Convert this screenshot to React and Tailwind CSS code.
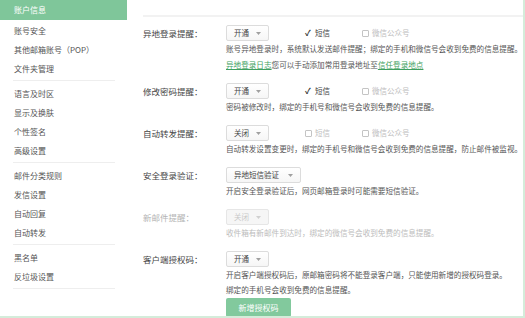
import React from 'react';

const font = { fontFamily: '"Noto Sans CJK SC", "Liberation Sans", sans-serif' };

const navGroups = [
  ['账户信息', '账号安全', '其他邮箱账号（POP）', '文件夹管理'],
  ['语言及时区', '显示及换肤', '个性签名', '高级设置'],
  ['邮件分类规则', '发信设置', '自动回复', '自动转发'],
  ['黑名单', '反垃圾设置'],
];

const Arrow = ({ light }) => (
  <svg width="5" height="3" viewBox="0 0 5 3" className="ml-auto">
    <path d="M0 0 L5 0 L2.5 3 Z" fill={light ? '#d0d0d0' : '#a0a0a0'} />
  </svg>
);

const Select = ({ value, width = 'w-[43px]', disabled }) => (
  <div
    className={`flex h-[16px] items-center rounded-[2px] border px-[7px] text-[7.5px] ${width} ${
      disabled
        ? 'border-[#e6e6e6] bg-[#f6f6f6] text-[#c8c8c8]'
        : 'border-[#dcdcdc] bg-gradient-to-b from-white to-[#f6f6f6] text-[#444]'
    }`}
  >
    <span>{value}</span>
    <Arrow light={disabled} />
  </div>
);

const Checks = ({ sms, disabled }) => (
  <div className="ml-[36px] flex items-center text-[7.5px]">
    <div className="flex w-[57px] items-center">
      {sms ? (
        <span className="w-[10px] text-[8px] font-bold leading-none text-[#333]">✓</span>
      ) : (
        <span className="mr-[3px] h-[7px] w-[7px] rounded-[1px] border border-[#c4c4c4] bg-white" />
      )}
      <span className={disabled ? 'text-[#c0c0c0]' : 'text-[#444]'}>短信</span>
    </div>
    <div className="flex items-center">
      <span className="mr-[3px] h-[7px] w-[7px] rounded-[1px] border border-[#c4c4c4] bg-white" />
      <span className="text-[#bdbdbd]">微信公众号</span>
    </div>
  </div>
);

const Row = ({ label, muted, children, desc, descMuted, tight }) => (
  <div className="mb-[10px] flex">
    <div
      className={`h-[16px] w-[83px] shrink-0 text-[8.5px] leading-[16px] ${
        muted ? 'text-[#b4b4b4]' : 'text-[#444]'
      }`}
    >
      {label}
    </div>
    <div className="flex-1">
      <div className="flex items-center">{children}</div>
      <div
        className={`whitespace-nowrap text-[7.6px] ${tight ? 'leading-[15px]' : 'leading-[16px]'} ${
          descMuted ? 'text-[#bcbcbc]' : 'text-[#555]'
        }`}
      >
        {desc}
      </div>
    </div>
  </div>
);

export default function App() {
  return (
    <div
      className="flex h-[318px] w-[525px] overflow-hidden border-b-2 border-[#d4ecda] bg-white"
      style={font}
    >
      {/* 左侧导航 */}
      <div className="w-[127px] shrink-0">
        {navGroups.map((group, gi) => (
          <div key={gi}>
            {group.map((item, i) =>
              gi === 0 && i === 0 ? (
                <div
                  key={item}
                  className="mb-[1px] flex h-[20px] items-center bg-[#7fc69a] pl-[14px] text-[8px] text-white"
                >
                  {item}
                </div>
              ) : (
                <div key={item} className="flex h-[19px] items-center pl-[14px] text-[8px] text-[#555]">
                  {item}
                </div>
              )
            )}
            <div className="mx-[13px] mb-[3px] mt-[2px] h-px w-[102px] bg-[#eeeeee]" />
          </div>
        ))}
      </div>

      {/* 右侧设置 */}
      <div className="flex-1 border-r-2 border-[#d4ecda] pl-[16px]">
        <div className="h-[17px] border-b-2 border-[#f2f2f2]" />
        <div className="pt-[8px]">
          <Row
            label="异地登录提醒："
            desc={
              <>
                <div>账号异地登录时，系统默认发送邮件提醒；绑定的手机和微信号会收到免费的信息提醒。</div>
                <div>
                  <span className="text-[#3f9f5f] underline">异地登录日志</span>
                  您可以手动添加常用登录地址至
                  <span className="text-[#3f9f5f] underline">信任登录地点</span>
                </div>
              </>
            }
          >
            <Select value="开通" />
            <Checks sms />
          </Row>
          <Row label="修改密码提醒：" desc="密码被修改时，绑定的手机号和微信号会收到免费的信息提醒。">
            <Select value="开通" />
            <Checks sms />
          </Row>
          <Row
            label="自动转发提醒："
            desc="自动转发设置变更时，绑定的手机号和微信号会收到免费的信息提醒，防止邮件被监视。"
          >
            <Select value="关闭" />
            <Checks disabled />
          </Row>
          <Row label="安全登录验证：" desc="开启安全登录验证后，网页邮箱登录时可能需要短信验证。">
            <Select value="异地短信验证" width="w-[75px]" />
          </Row>
          <Row
            label="新邮件提醒："
            muted
            descMuted
            desc="收件箱有新邮件到达时，绑定的微信号会收到免费的信息提醒。"
          >
            <Select value="关闭" disabled />
          </Row>
          <Row
            label="客户端授权码："
            tight
            desc={
              <>
                <div>开启客户端授权码后，原邮箱密码将不能登录客户端，只能使用新增的授权码登录。</div>
                <div>绑定的手机号会收到免费的信息提醒。</div>
                <button className="mt-px h-[19px] w-[65px] rounded-[2px] bg-[#82c99d] text-[8px] text-white">
                  新增授权码
                </button>
              </>
            }
          >
            <Select value="开通" />
          </Row>
        </div>
      </div>
    </div>
  );
}
